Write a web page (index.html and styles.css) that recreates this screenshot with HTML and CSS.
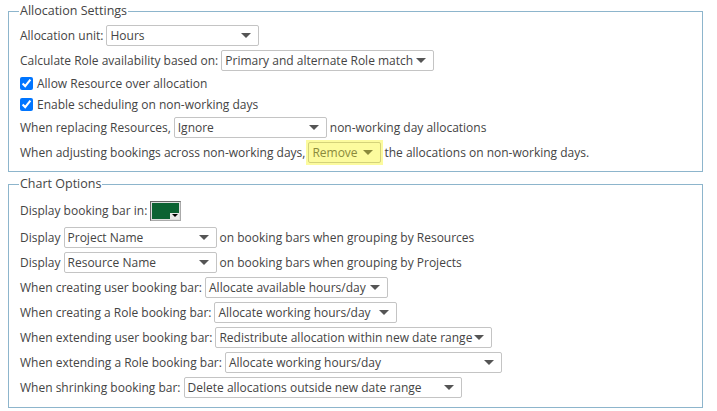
FILE: index.html
```html
<!DOCTYPE html>
<html lang="en">
<head>
  <meta charset="UTF-8">
  <title>Allocation Settings</title>
  <link rel="stylesheet" href="styles.css">
</head>
<body>
  <fieldset class="group">
    <legend>Allocation Settings</legend>
    <div class="row">
      <span>Allocation unit:</span>
      <span class="dd w153">Hours<i class="caret"></i></span>
    </div>
    <div class="row">
      <span>Calculate Role availability based on:</span>
      <span class="dd w213">Primary and alternate Role match<i class="caret"></i></span>
    </div>
    <label class="check"><input type="checkbox" checked> Allow Resource over allocation</label>
    <label class="check"><input type="checkbox" checked> Enable scheduling on non-working days</label>
    <div class="row">
      <span>When replacing Resources,</span>
      <span class="dd w153">Ignore<i class="caret"></i></span>
      <span>non-working day allocations</span>
    </div>
    <div class="row">
      <span>When adjusting bookings across non-working days,</span>
      <span class="hilite"><span class="dd w73">Remove<i class="caret"></i></span></span>
      <span>the allocations on non-working days.</span>
    </div>
  </fieldset>

  <fieldset class="group">
    <legend>Chart Options</legend>
    <div class="row swatch-row">
      <span>Display booking bar in:</span>
      <span class="swatch"><span class="fill"></span><i class="mini"></i></span>
    </div>
    <div class="row">
      <span>Display</span>
      <span class="dd w153">Project Name<i class="caret"></i></span>
      <span>on booking bars when grouping by Resources</span>
    </div>
    <div class="row">
      <span>Display</span>
      <span class="dd w153">Resource Name<i class="caret"></i></span>
      <span>on booking bars when grouping by Projects</span>
    </div>
    <div class="row">
      <span>When creating user booking bar:</span>
      <span class="dd w183">Allocate available hours/day<i class="caret"></i></span>
    </div>
    <div class="row">
      <span>When creating a Role booking bar:</span>
      <span class="dd w183">Allocate working hours/day<i class="caret"></i></span>
    </div>
    <div class="row">
      <span>When extending user booking bar:</span>
      <span class="dd w277">Redistribute allocation within new date range<i class="caret"></i></span>
    </div>
    <div class="row">
      <span>When extending a Role booking bar:</span>
      <span class="dd w277">Allocate working hours/day<i class="caret"></i></span>
    </div>
    <div class="row">
      <span>When shrinking booking bar:</span>
      <span class="dd w278">Delete allocations outside new date range<i class="caret"></i></span>
    </div>
  </fieldset>
</body>
</html>
```

FILE: styles.css
```css
body {
  margin: 0;
  padding: 2px 14px 0 8px;
  font-family: "Open Sans", "Liberation Sans", sans-serif;
  font-size: 12px;
  color: #444;
  background: #fff;
}
.group {
  margin: 0 0 3px 0;
  padding: 3px 11px 6px 11px;
  border: 1px solid #8db5cc;
  min-width: 0;
}
.group legend {
  padding: 0 1px;
  margin-left: -1px;
  line-height: 18px;
  font-size: 12.5px;
  color: #444;
}
.group + .group {
  padding-bottom: 7px;
}
.row {
  display: flex;
  align-items: center;
  gap: 3px;
  height: 25px;
  white-space: nowrap;
}
.check {
  display: flex;
  align-items: center;
  height: 21px;
  white-space: nowrap;
}
.check input {
  margin: 0 4px 0 0;
  width: 13px;
  height: 13px;
}
.dd {
  position: relative;
  box-sizing: border-box;
  height: 21px;
  line-height: 19px;
  padding-left: 3px;
  border: 1px solid #c4c4c4;
  border-radius: 2px;
  background: #fff;
  color: #444;
}
.caret {
  position: absolute;
  right: 7px;
  top: 7px;
  width: 0;
  height: 0;
  border-left: 5px solid transparent;
  border-right: 5px solid transparent;
  border-top: 5px solid #555;
}
.w73 { width: 73px; }
.w153 { width: 153px; }
.w183 { width: 183px; }
.w213 { width: 213px; }
.w277 { width: 277px; }
.w278 { width: 278px; }
.hilite {
  display: flex;
  align-items: center;
  height: 25px;
  padding: 0 2px;
  margin: 0 -2px;
  background: #fcfb9e;
}
.hilite .dd {
  background: #fcfb9e;
  border-color: #d4d27a;
  color: #8a8a3c;
}
.hilite .caret {
  border-top-color: #8a8a3c;
}
.swatch-row {
  height: 29px;
}
.swatch {
  position: relative;
  display: inline-block;
  box-sizing: border-box;
  width: 31px;
  height: 20px;
  border: 1px solid #666;
  border-right-color: #aaa;
  border-bottom-color: #aaa;
  padding: 1px;
  background: #ddd;
}
.swatch .fill {
  display: block;
  height: 100%;
  background: #0b6232;
}
.swatch .mini {
  position: absolute;
  right: 1px;
  bottom: 1px;
  width: 9px;
  height: 6px;
  background: #e8e8e8;
}
.swatch .mini::after {
  content: "";
  position: absolute;
  left: 2px;
  top: 1px;
  border-left: 3px solid transparent;
  border-right: 3px solid transparent;
  border-top: 3px solid #000;
}
```
